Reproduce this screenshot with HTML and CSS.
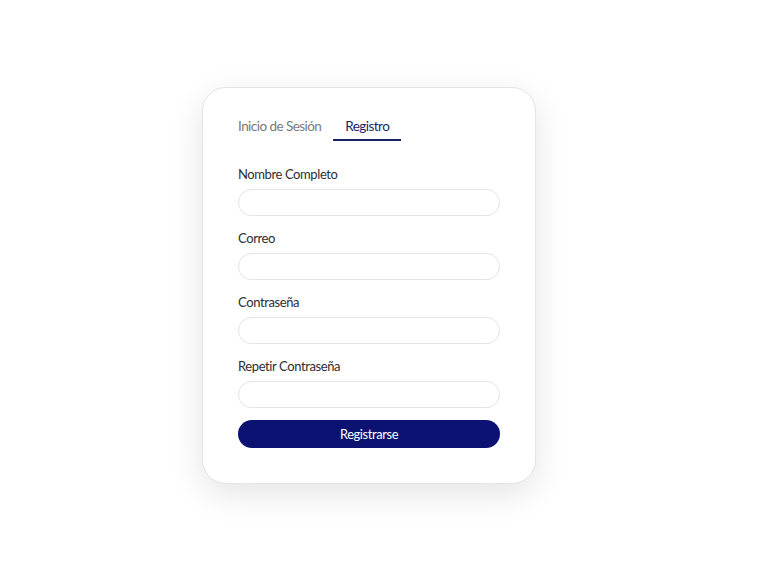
FILE: index.html
```html
<!DOCTYPE html>
<html lang="es">
<head>
<meta charset="utf-8">
<title>Registro</title>
<link rel="stylesheet" href="styles.css">
</head>
<body>
<main class="page">
  <section class="card">
    <nav class="tabs">
      <span class="tab">Inicio de Sesión</span>
      <span class="tab tab-active">Registro</span>
    </nav>
    <form class="form">
      <label class="field">
        <span class="label">Nombre Completo</span>
        <input class="input" type="text">
      </label>
      <label class="field">
        <span class="label">Correo</span>
        <input class="input" type="email">
      </label>
      <label class="field">
        <span class="label">Contraseña</span>
        <input class="input" type="password">
      </label>
      <label class="field">
        <span class="label">Repetir Contraseña</span>
        <input class="input" type="password">
      </label>
      <button class="submit" type="button">Registrarse</button>
    </form>
  </section>
</main>
</body>
</html>
```
FILE: styles.css
```css
* { box-sizing: border-box; }
html, body { margin: 0; padding: 0; background: #ffffff; }
body {
  font-family: Lato, "Noto Sans", "Liberation Sans", sans-serif;
  color: #2b2b2b;
}
.page {
  min-height: 100vh;
  display: flex;
  align-items: center;
  justify-content: center;
  padding-right: 28px;
  padding-bottom: 2px;
}
.card {
  width: 334px;
  background: #fff;
  border: 1px solid #e4e4e4;
  border-radius: 24px;
  box-shadow: 0 10px 34px rgba(0, 0, 0, 0.11);
  padding: 29px 35px 35px;
}
.tabs {
  display: flex;
  margin-left: -12px;
}
.tab {
  font-size: 13.5px;
  letter-spacing: -0.55px;
  line-height: 19px;
  padding: 0 12px 3px;
  color: #7a7a7a;
  border-bottom: 2px solid transparent;
}
.tab-active {
  color: #1b1f66;
  border-bottom-color: #1b1f66;
}
.form {
  display: flex;
  flex-direction: column;
  gap: 14px;
  margin-top: 25px;
}
.field {
  display: flex;
  flex-direction: column;
  gap: 6px;
}
.label {
  font-size: 13px;
  letter-spacing: -0.4px;
  line-height: 17px;
  color: #2e2e2e;
}
.input {
  height: 27px;
  border: 1px solid #e3e3e3;
  border-radius: 14px;
  background: #fff;
  padding: 0 12px;
  font: inherit;
  outline: none;
}
.submit {
  margin-top: -2px;
  height: 28px;
  border: none;
  border-radius: 14px;
  background: #0c1271;
  color: #fff;
  font-family: inherit;
  font-size: 12.8px;
  letter-spacing: -0.35px;
  cursor: pointer;
}
```
